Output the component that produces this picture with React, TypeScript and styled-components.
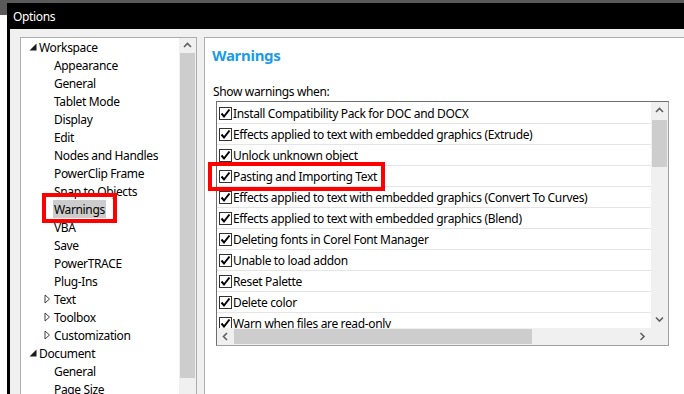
import React from 'react';
import styled, { createGlobalStyle } from 'styled-components';

const GlobalStyle = createGlobalStyle`
  html, body {
    margin: 0;
    padding: 0;
    width: 684px;
    height: 394px;
    overflow: hidden;
  }
  body {
    background: #fff;
    font-family: "Noto Sans", "Open Sans", sans-serif;
    font-size: 12px;
    letter-spacing: -0.35px;
    color: #000;
  }
`;

const Desktop = styled.div`
  box-sizing: border-box;
  height: 394px;
  padding: 3px 0 0 7px;
  background:
    linear-gradient(#5a5a5a, #5a5a5a) 0 0 / 100% 3px no-repeat,
    linear-gradient(#5a5a5a, #5a5a5a) 0 0 / 7px 15px no-repeat,
    #fff;
`;

const Window = styled.div`
  display: flex;
  flex-direction: column;
  height: 100%;
  background: #f0f0f0;
  border-left: 3px solid #000;
`;

const TitleBar = styled.div`
  display: flex;
  align-items: center;
  height: 26px;
  padding: 1px 0 0 3px;
  box-sizing: border-box;
  background: #000;
  color: #fff;
`;

const Body = styled.div`
  display: flex;
  flex: 1;
  gap: 7px;
  padding: 8px 0 0 10px;
  min-height: 0;
`;

const TreePanel = styled.div`
  box-sizing: border-box;
  display: grid;
  grid-template-columns: 1fr 17px;
  width: 177px;
  background: #fff;
  border: 1px solid #adadad;
  border-bottom: none;
`;

const TreeList = styled.div`
  display: flex;
  flex-direction: column;
`;

const TreeRow = styled.div<{ $level: number }>`
  display: flex;
  align-items: center;
  height: 18px;
  padding-left: ${(p) => (p.$level === 0 ? 8 : 23)}px;
  white-space: nowrap;
`;

const Toggle = styled.span`
  display: flex;
  align-items: center;
  width: 9px;
  height: 18px;
`;

const TreeLabel = styled.span<{ $selected?: boolean }>`
  position: relative;
  display: flex;
  align-items: center;
  height: 18px;
  padding: 0 1px;
  background: ${(p) => (p.$selected ? '#cccccc' : 'transparent')};
`;

const Callout = styled.span`
  position: absolute;
  box-sizing: border-box;
  border: 4px solid #ff0000;
  pointer-events: none;
`;

const ScrollV = styled.div`
  display: flex;
  flex-direction: column;
  background: #f0f0f0;
`;

const ScrollH = styled.div`
  display: flex;
  background: #f0f0f0;
`;

const ArrowBox = styled.div<{ $size: number }>`
  display: flex;
  align-items: center;
  justify-content: center;
  flex: 0 0 ${(p) => p.$size}px;
`;

const ThumbV = styled.div<{ $length: number }>`
  height: ${(p) => p.$length}px;
  margin: 0 1px;
  background: #cdcdcd;
`;

const ThumbH = styled.div<{ $length: number }>`
  width: ${(p) => p.$length}px;
  margin: 1px 0;
  background: #cdcdcd;
`;

const Spacer = styled.div`
  flex: 1;
`;

const Content = styled.div`
  flex: 1;
  display: flex;
  flex-direction: column;
  background: #fff;
  border-top: 1px solid #adadad;
  border-left: 1px solid #adadad;
`;

const Heading = styled.h2`
  margin: 7px 0 0 7px;
  line-height: 20px;
  font-size: 15px;
  font-weight: 700;
  letter-spacing: -0.3px;
  color: #1c9ce6;
`;

const Caption = styled.div`
  margin: 19px 0 0 8px;
  line-height: 16px;
`;

const ListBox = styled.div`
  position: relative;
  box-sizing: border-box;
  display: grid;
  grid-template-columns: 1fr 17px;
  grid-template-rows: 1fr 17px;
  width: 453px;
  height: 245px;
  margin: 1px 0 0 11px;
  border: 1px solid #a0a0a0;
  border-top-color: #6e6e6e;
  border-left-color: #6e6e6e;
`;

const Viewport = styled.div`
  overflow: hidden;
  padding-top: 1px;
`;

const ListRow = styled.div`
  box-sizing: border-box;
  display: flex;
  align-items: center;
  height: 21px;
  padding-left: 2px;
  border-bottom: 1px solid #e5e5e5;
  white-space: nowrap;
`;

const CheckBox = styled.span`
  box-sizing: border-box;
  display: flex;
  align-items: center;
  justify-content: center;
  flex: 0 0 13px;
  height: 13px;
  margin-right: 1px;
  border: 1px solid #333;
  background: #fff;
`;

const Corner = styled.div`
  background: #f0f0f0;
`;

const Chevron = ({ dir }: { dir: 'up' | 'down' | 'left' | 'right' }) => {
  const pts = {
    up: '1,5 4.5,1.5 8,5',
    down: '1,1.5 4.5,5 8,1.5',
    left: '5,1 1.5,4.5 5,8',
    right: '1.5,1 5,4.5 1.5,8',
  }[dir];
  const vertical = dir === 'up' || dir === 'down';
  return (
    <svg width={vertical ? 9 : 7} height={vertical ? 7 : 9} viewBox={vertical ? '0 0 9 7' : '0 0 7 9'}>
      <polyline points={pts} fill="none" stroke="#606060" strokeWidth="1.6" />
    </svg>
  );
};

const Expanded = () => (
  <svg width="8" height="8" viewBox="0 0 8 8">
    <polygon points="7.5,0.5 7.5,7.5 0.5,7.5" fill="#1a1a1a" />
  </svg>
);

const Collapsed = () => (
  <svg width="7" height="10" viewBox="0 0 7 10">
    <polygon points="1,1 5.5,5 1,9" fill="none" stroke="#404040" strokeWidth="1" />
  </svg>
);

const Check = () => (
  <svg width="11" height="11" viewBox="0 0 11 11">
    <polyline points="1.5,5.5 4,8.5 9.5,1.5" fill="none" stroke="#000" strokeWidth="2" />
  </svg>
);

type Node = { label: string; level: number; toggle?: 'open' | 'closed'; selected?: boolean };

const tree: Node[] = [
  { label: 'Workspace', level: 0, toggle: 'open' },
  { label: 'Appearance', level: 1 },
  { label: 'General', level: 1 },
  { label: 'Tablet Mode', level: 1 },
  { label: 'Display', level: 1 },
  { label: 'Edit', level: 1 },
  { label: 'Nodes and Handles', level: 1 },
  { label: 'PowerClip Frame', level: 1 },
  { label: 'Snap to Objects', level: 1 },
  { label: 'Warnings', level: 1, selected: true },
  { label: 'VBA', level: 1 },
  { label: 'Save', level: 1 },
  { label: 'PowerTRACE', level: 1 },
  { label: 'Plug-Ins', level: 1 },
  { label: 'Text', level: 1, toggle: 'closed' },
  { label: 'Toolbox', level: 1, toggle: 'closed' },
  { label: 'Customization', level: 1, toggle: 'closed' },
  { label: 'Document', level: 0, toggle: 'open' },
  { label: 'General', level: 1 },
  { label: 'Page Size', level: 1 },
];

const warnings = [
  'Install Compatibility Pack for DOC and DOCX',
  'Effects applied to text with embedded graphics (Extrude)',
  'Unlock unknown object',
  'Pasting and Importing Text',
  'Effects applied to text with embedded graphics (Convert To Curves)',
  'Effects applied to text with embedded graphics (Blend)',
  'Deleting fonts in Corel Font Manager',
  'Unable to load addon',
  'Reset Palette',
  'Delete color',
  'Warn when files are read-only',
];

const App = () => (
  <>
    <GlobalStyle />
    <Desktop>
      <Window>
        <TitleBar>Options</TitleBar>
        <Body>
          <TreePanel>
            <TreeList>
              {tree.map((n, i) => (
                <TreeRow key={i} $level={n.level}>
                  <Toggle>
                    {n.toggle === 'open' && <Expanded />}
                    {n.toggle === 'closed' && <Collapsed />}
                  </Toggle>
                  <TreeLabel $selected={n.selected}>
                    {n.label}
                    {n.selected && (
                      <Callout style={{ left: -11, top: -7, width: 75, height: 30 }} />
                    )}
                  </TreeLabel>
                </TreeRow>
              ))}
            </TreeList>
            <ScrollV>
              <ArrowBox $size={15}>
                <Chevron dir="up" />
              </ArrowBox>
              <ThumbV $length={325} />
            </ScrollV>
          </TreePanel>

          <Content>
            <Heading>Warnings</Heading>
            <Caption>Show warnings when:</Caption>
            <ListBox>
              <Viewport>
                {warnings.map((w) => (
                  <ListRow key={w}>
                    <CheckBox>
                      <Check />
                    </CheckBox>
                    {w}
                  </ListRow>
                ))}
              </Viewport>
              <ScrollV>
                <ArrowBox $size={17}>
                  <Chevron dir="up" />
                </ArrowBox>
                <ThumbV $length={47} style={{ marginTop: 1 }} />
                <Spacer />
                <ArrowBox $size={17}>
                  <Chevron dir="down" />
                </ArrowBox>
              </ScrollV>
              <ScrollH>
                <ArrowBox $size={17}>
                  <Chevron dir="left" />
                </ArrowBox>
                <ThumbH $length={298} />
                <Spacer />
                <ArrowBox $size={17}>
                  <Chevron dir="right" />
                </ArrowBox>
              </ScrollH>
              <Corner />
              <Callout style={{ left: -9, top: 60, width: 177, height: 29 }} />
            </ListBox>
          </Content>
        </Body>
      </Window>
    </Desktop>
  </>
);

export default App;
